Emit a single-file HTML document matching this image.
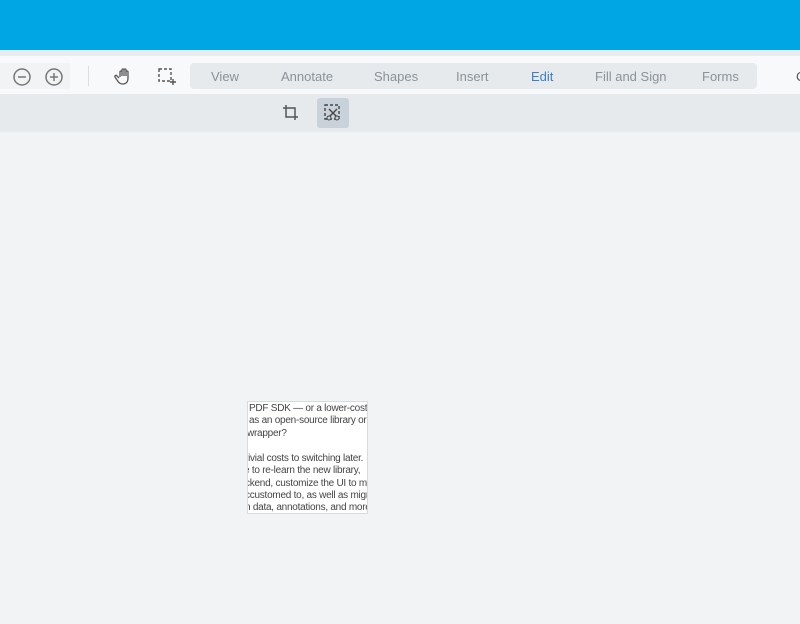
<!DOCTYPE html><html><head><style>
body{margin:0;width:800px;height:624px;background:#f1f3f5;font-family:"Liberation Sans",sans-serif;position:relative;overflow:hidden}
.hdr{position:absolute;left:0;top:0;width:800px;height:50px;background:#00a5e3}
.line{position:absolute;top:50px;left:0;width:800px;height:6px;background:#e9ecef}
.tb{position:absolute;top:56px;left:0;width:800px;height:38px;background:#f8f9fa}
.sub{position:absolute;top:94px;left:0;width:800px;height:38px;background:#e6eaed}
.tabs{position:absolute;left:190px;top:63px;width:567px;height:26px;background:#e6eaed;border-radius:4px}
.t{position:absolute;top:69px;font-size:13px;color:#8a9299}
.ic{position:absolute}
.doc{position:absolute;left:247px;top:401px;width:119px;height:111px;background:#fff;border:1px solid #d8dcdf;overflow:hidden;font-size:10px;line-height:12.3px;color:#444;letter-spacing:-0.25px}
.doc div{position:absolute;white-space:nowrap}
</style></head><body>
<div class="hdr"></div><div class="line"></div><div class="tb"></div><div class="sub"></div>
<div style="position:absolute;left:0;top:63px;width:70px;height:26px;background:#f1f3f5"></div>
<svg class="ic" style="left:12px;top:67px" width="20" height="20" viewBox="0 0 20 20"><circle cx="10" cy="10" r="8" fill="none" stroke="#777" stroke-width="1.5"/><path d="M6 10h8" stroke="#777" stroke-width="1.5"/></svg>
<svg class="ic" style="left:44px;top:67px" width="20" height="20" viewBox="0 0 20 20"><circle cx="10" cy="10" r="8" fill="none" stroke="#777" stroke-width="1.5"/><path d="M6 10h8M10 6v8" stroke="#777" stroke-width="1.5"/></svg>
<div style="position:absolute;left:88px;top:66px;width:1px;height:20px;background:#ddd"></div>
<svg class="ic" style="left:114px;top:66px" width="20" height="20" viewBox="0 0 20 20"><path d="M6 11V6a1 1 0 012 0v4V4a1 1 0 012 0v6V4a1 1 0 012 0v6V6a1 1 0 012 0v6c0 4-2 6-5 6s-4-1-6-4l-2-3a1 1 0 012-1l2 2" fill="none" stroke="#555" stroke-width="1.3"/></svg>
<svg class="ic" style="left:157px;top:67px" width="20" height="20" viewBox="0 0 20 20"><rect x="2" y="2" width="12" height="12" fill="none" stroke="#555" stroke-width="1.4" stroke-dasharray="3 2"/><path d="M16 12v6M13 15h6" stroke="#555" stroke-width="1.4"/></svg>
<div class="tabs"></div>
<div class="t" style="left:211px">View</div><div class="t" style="left:281px">Annotate</div><div class="t" style="left:374px">Shapes</div><div class="t" style="left:456px">Insert</div><div class="t" style="left:531px;color:#3c7fc4">Edit</div><div class="t" style="left:595px">Fill and Sign</div><div class="t" style="left:702px">Forms</div>
<div class="t" style="left:796px;color:#555">C</div>
<svg class="ic" style="left:281px;top:103px" width="20" height="20" viewBox="0 0 20 20"><path d="M5 2v12h12M2 5h12v12" fill="none" stroke="#555" stroke-width="1.5"/></svg>
<div style="position:absolute;left:317px;top:98px;width:32px;height:30px;background:#c9d2da;border-radius:3px"></div>
<svg class="ic" style="left:323px;top:103px" width="20" height="20" viewBox="0 0 20 20"><rect x="2" y="2" width="14" height="14" fill="none" stroke="#444" stroke-width="1.4" stroke-dasharray="3 2"/><path d="M6 6l8 8M14 6l-8 8" stroke="#444" stroke-width="1.4"/><circle cx="6" cy="15" r="2" fill="#c9d2da" stroke="#444"/><circle cx="14" cy="15" r="2" fill="#c9d2da" stroke="#444"/></svg>
<div class="doc">
<div style="left:1px;top:1px">PDF SDK — or a lower-cost</div>
<div style="left:1px;top:13px">as an open-source library or</div>
<div style="left:-1px;top:26px">wrapper?</div>
<div style="left:-3px;top:51px">rivial costs to switching later.</div>
<div style="left:-4px;top:63px">e to re-learn the new library,</div>
<div style="left:-3px;top:76px">ckend, customize the UI to ma</div>
<div style="left:-3px;top:88px">ccustomed to, as well as migr</div>
<div style="left:-3px;top:100px">n data, annotations, and more</div>
</div>
</body></html>
